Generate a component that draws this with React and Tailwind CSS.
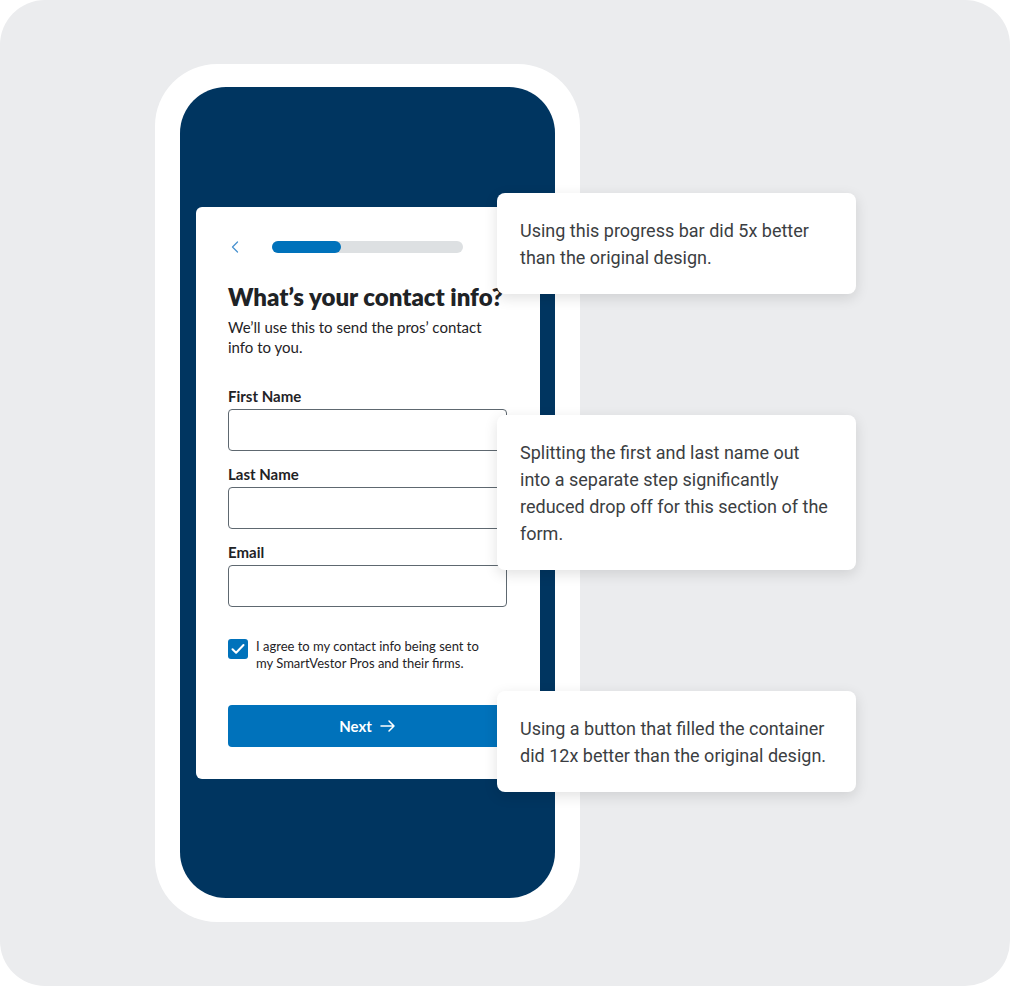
import React from "react";

const notes = [
  { top: "top-[193px]", lines: ["Using this progress bar did 5x better", "than the original design."] },
  {
    top: "top-[415px]",
    lines: [
      "Splitting the first and last name out",
      "into a separate step significantly",
      "reduced drop off for this section of the",
      "form.",
    ],
  },
  { top: "top-[691px]", lines: ["Using a button that filled the container", "did 12x better than the original design."] },
];

function Field({ label }) {
  return (
    <div>
      <div className="text-[15px] leading-5 font-bold text-[#1f2326] mb-[3px]">{label}</div>
      <div className="h-[42px] rounded-[4px] border border-[#5e6870] bg-white" />
    </div>
  );
}

function Note({ top, lines }) {
  return (
    <div
      className={`absolute left-[497px] ${top} w-[359px] rounded-lg bg-white pl-[23px] pr-3 pt-6 pb-[23px] shadow-[0_4px_14px_rgba(0,0,0,0.12)]`}
      style={{ fontFamily: "Roboto, sans-serif" }}
    >
      <p className="text-[18px] leading-[27px] text-[#3b3e42] whitespace-nowrap">
        {lines.map((l, i) => (
          <span key={i} className="block">
            {l}
          </span>
        ))}
      </p>
    </div>
  );
}

export default function App() {
  return (
    <div className="bg-white">
      <div className="relative h-[986px] w-[1010px] rounded-[45px] bg-[#ebecee] pl-[155px] pt-[64px]">
        {/* phone */}
        <div className="h-[858px] w-[425px] rounded-[62px] bg-white px-[25px] pt-[23px] pb-[24px]">
          <div className="h-full rounded-[46px] bg-[#003560] pt-[120px] pl-4">
            <div
              className="w-[344px] rounded-md bg-white pl-8 pr-[33px] pt-8 pb-8"
              style={{ fontFamily: "Lato, sans-serif" }}
            >
              <div className="flex items-center gap-[28px]">
                <svg width="16" height="16" viewBox="0 0 16 16" fill="none">
                  <path d="M9.5 3L4.5 8l5 5" stroke="#4a93d0" strokeWidth="1.3" strokeLinecap="round" strokeLinejoin="round" />
                </svg>
                <div className="h-3 w-[191px] rounded-full bg-[#dde0e2]">
                  <div className="h-3 w-[69px] rounded-full bg-[#0072bb]" />
                </div>
              </div>

              <h1 className="mt-[26px] text-[24px] leading-8 font-extrabold text-[#1f2326] whitespace-nowrap">
                What’s your contact info?
              </h1>
              <p className="mt-1 text-[15px] leading-5 text-[#1f2326]">
                We’ll use this to send the pros’ contact
                <br />
                info to you.
              </p>

              <div className="mt-[29px] flex flex-col gap-[13px]">
                <Field label="First Name" />
                <Field label="Last Name" />
                <Field label="Email" />
              </div>

              <div className="mt-[32px] flex items-start gap-2">
                <div className="flex h-5 w-5 shrink-0 items-center justify-center rounded-[3px] bg-[#0072bb]">
                  <svg width="16" height="16" viewBox="0 0 16 16" fill="none">
                    <path d="M2.5 8.2l3.6 3.6L13.5 4" stroke="#fff" strokeWidth="2" strokeLinecap="round" strokeLinejoin="round" />
                  </svg>
                </div>
                <p className="-mt-[1px] text-[13px] leading-[17px] text-[#1f2326]">
                  I agree to my contact info being sent to
                  <br />
                  my SmartVestor Pros and their firms.
                </p>
              </div>

              <button className="mt-[33px] flex h-[42px] w-full items-center justify-center gap-2 rounded-[4px] bg-[#0072bb] text-[15px] font-bold text-white">
                Next
                <svg width="16" height="14" viewBox="0 0 16 14" fill="none">
                  <path d="M1 7h13M9 2l5 5-5 5" stroke="#fff" strokeWidth="1.5" strokeLinecap="round" strokeLinejoin="round" />
                </svg>
              </button>
            </div>
          </div>
        </div>

        {notes.map((n, i) => (
          <Note key={i} {...n} />
        ))}
      </div>
    </div>
  );
}
